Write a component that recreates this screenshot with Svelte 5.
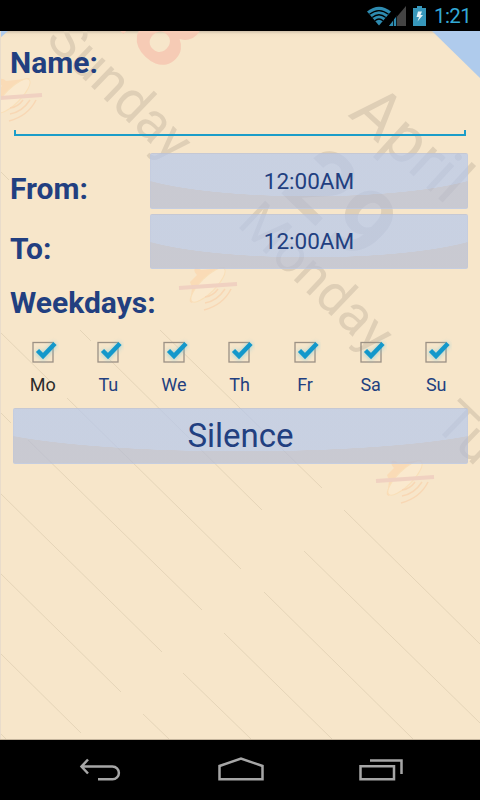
<script lang="ts">
  let name = $state('');
  let from = $state('12:00AM');
  let to = $state('12:00AM');
  let weekdays = $state([
    { label: 'Mo', checked: true },
    { label: 'Tu', checked: true },
    { label: 'We', checked: true },
    { label: 'Th', checked: true },
    { label: 'Fr', checked: true },
    { label: 'Sa', checked: true },
    { label: 'Su', checked: true },
  ]);

  // ruled lines of the calendar backdrop: x1, y1, x2, y2
  const rules = [
    [0, 140, 9, 149],
    [160, 299, 322, 457],
    [80, 299, 91, 310],
    [107, 326, 262, 479],
    [0, 301, 50, 350],
    [67, 367, 241, 538],
    [0, 381, 11, 392],
    [28, 409, 202, 579],
    [0, 462, 162, 621],
    [0, 542, 121, 661],
    [0, 622, 81, 702],
    [0, 702, 7, 709],
    [344, 479, 480, 613],
    [304, 520, 480, 692],
    [264, 561, 414, 709],
    [224, 602, 333, 709],
    [183, 642, 252, 709],
    [143, 683, 170, 709],
  ];

  const bells = [
    [13, 67],
    [208, 256],
    [405, 449],
  ];
</script>

<div class="phone">
  <header class="status-bar">
    <svg class="wifi" width="26" height="20" viewBox="0 0 26 20">
      <path d="M1 5.5Q13 -4 25 5.5L13 19.5Z" fill="#2e8bb0" />
      <path d="M3.5 8.3Q13 .8 22.5 8.3M6.2 11.5Q13 6 19.8 11.5M8.9 14.7Q13 11.3 17.1 14.7" fill="none" stroke="#000" stroke-width="1.3" />
    </svg>
    <svg class="signal" width="17" height="20" viewBox="0 0 17 20">
      <path d="M17 0V20H0Z" fill="#444" />
      <path d="M8 9.5V20H0Z" fill="#2e8bb0" />
      <path d="M4.5 13V20M7.5 10V20" stroke="#000" stroke-width=".8" />
    </svg>
    <svg class="battery" width="13" height="20" viewBox="0 0 13 20">
      <path d="M4 0h5v2h4v18H0V2h4Z" fill="#3797bb" />
      <path d="M5 5.5h4L7.5 9H10L4.5 15.5 6 11H3.5Z" fill="#e4f2f7" />
    </svg>
    <span class="clock">1:21</span>
  </header>

  <main>
    <svg class="backdrop" width="480" height="709" viewBox="0 0 480 709" aria-hidden="true">
      <path d="M432 0H480V47Z" fill="#afcbec" />
      <path d="M0 0H8L0 7Z" fill="#afcbec" />
      {#each rules as [x1, y1, x2, y2]}
        <line {x1} {y1} {x2} {y2} stroke="#8a7a60" stroke-opacity=".16" />
      {/each}
      <g class="ink">
        <text font-size="54" transform="translate(44 10) rotate(44)">Sunday</text>
        <text font-size="66" transform="translate(347 84) rotate(42.5)">April</text>
        <text class="date" font-size="97" transform="translate(278 159) rotate(44)">29</text>
        <text font-size="53" transform="translate(236 194) rotate(43.7)">Monday</text>
        <text font-size="55" transform="translate(432 394) rotate(44)">Tuesday</text>
      </g>
      <text class="date holiday" font-size="97" transform="translate(86 -33) rotate(44)">28</text>
      {#each bells as [x, y]}
        <g transform="translate({x} {y})">
          <path d="M-18 -5L-11 -12Q-15 -16 -13 -19Q-10 -20 -7 -17Q5 -18 17 -20L-16 16Q-20 15 -17 9L-16 1Z" fill="#fadbb6" />
          <ellipse rx="23" ry="7.5" transform="translate(0 -2) rotate(-45)" fill="#fae9ce" stroke="#f9dfb8" />
          <path d="M-3 10Q5 9 10 2M-3 16Q9 14 17 2M-4 23Q15 18 23 2" fill="none" stroke="#f8d7b4" stroke-width="1.5" />
          <path d="M-29 1L29 -3" stroke="#f0d1c1" stroke-width="4" />
        </g>
      {/each}
      <path d="M.5 0V709" stroke="#e9dccb" />
      <path d="M0 708.5H480" stroke="#c4b49c" />
    </svg>

    <form class="editor" onsubmit={(e) => e.preventDefault()}>
      <label class="heading" for="name">Name:</label>
      <div class="field">
        <input id="name" type="text" autocomplete="off" bind:value={name} />
      </div>

      <div class="time-row">
        <span class="heading">From:</span>
        <button type="button">{from}</button>
      </div>
      <div class="time-row">
        <span class="heading">To:</span>
        <button type="button">{to}</button>
      </div>

      <h2 class="heading weekdays-heading">Weekdays:</h2>
      <div class="weekdays">
        {#each weekdays as day, i}
          <label class="day" class:first={i === 0}>
            <input type="checkbox" bind:checked={day.checked} />
            <svg width="32" height="32" viewBox="0 0 32 32">
              <rect x="6" y="7.5" width="20" height="19.5" fill="none" stroke="#9c9184" stroke-width="1.3" />
              {#if day.checked}
                <path class="glow" d="M10 16L16 21.5 28.5 8.5" />
                <path class="tick" d="M10.5 15.5L16 21 28 8.5" />
              {/if}
            </svg>
            <span>{day.label}</span>
          </label>
        {/each}
      </div>

      <button class="mode" type="button">Silence</button>
    </form>
  </main>

  <nav class="nav-bar">
    <svg width="44" height="26" viewBox="0 0 44 26">
      <path d="M4 9.5H34.5A6.3 6.3 0 0 1 34.5 22.3H20M10 2.5L3.5 9.5 10 16.5" />
    </svg>
    <svg width="48" height="26" viewBox="0 0 48 26">
      <path d="M2.5 22.3V9L24 1.5 45.5 9V22.3Z" />
    </svg>
    <svg width="44" height="26" viewBox="0 0 44 26">
      <path d="M1.5 9.3H35V22.3H1.5ZM11 3.5H42.5V17" />
    </svg>
  </nav>
</div>

<style>
  :global(body) {
    margin: 0;
    background: #000;
  }

  .phone {
    width: 480px;
    height: 800px;
    display: flex;
    flex-direction: column;
    overflow: hidden;
    background: #000;
    color: #223f80;
    font-family: Roboto, 'Liberation Sans', sans-serif;
  }

  .status-bar {
    height: 31px;
    display: flex;
    justify-content: flex-end;
    align-items: center;
    padding-right: 8px;
    box-sizing: border-box;
  }

  .signal {
    margin-left: -3px;
  }

  .battery {
    margin-left: 7px;
  }

  .clock {
    width: 38px;
    margin-left: 8px;
    color: #33a9d6;
    font-size: 20.5px;
    letter-spacing: -0.6px;
  }

  main {
    position: relative;
    height: 709px;
    background: linear-gradient(#cfc0aa, #f3e2c6 3px, #f7e6ca 7px);
  }

  .backdrop {
    position: absolute;
    inset: 0;
  }

  .ink {
    fill: #dfcfb6;
  }

  .date {
    font-weight: 700;
  }

  .holiday {
    fill: #f6cbb5;
  }

  .editor {
    position: relative;
    display: flex;
    flex-direction: column;
    padding: 12px 12px 0 10px;
  }

  .heading {
    margin: 0;
    font-size: 30px;
    font-weight: 700;
    line-height: 40px;
  }

  .field {
    height: 51px;
    margin: 0 2px 17px 4px;
    display: flex;
    border-bottom: 2px solid #1b9dc9;
    background:
      linear-gradient(#1b9dc9, #1b9dc9) left bottom / 2px 4px no-repeat,
      linear-gradient(#1b9dc9, #1b9dc9) right bottom / 2px 4px no-repeat;
  }

  .field input {
    width: 100%;
    padding: 0 8px;
    border: 0;
    outline: 0;
    background: none;
    font: 24px Roboto, sans-serif;
  }

  .time-row {
    display: flex;
    align-items: flex-end;
    margin-bottom: 5px;
  }

  .time-row .heading {
    width: 140px;
    line-height: 40px;
  }

  button {
    flex: 1;
    height: 55.5px;
    padding: 0;
    border: 1px solid rgba(190, 198, 220, 0.3);
    border-radius: 2px;
    background: radial-gradient(
      ellipse 60% 33.5px at 50% 9px,
      rgba(180, 199, 236, 0.7) 99%,
      rgba(181, 189, 213, 0.7) 100%
    );
    color: #223f80;
    font-family: inherit;
    font-size: 22.5px;
  }

  .weekdays-heading {
    margin-top: 9px;
  }

  .weekdays {
    display: grid;
    grid-template-columns: repeat(7, 1fr);
    margin: 12px -1px 0 0;
  }

  .day {
    display: flex;
    flex-direction: column;
    align-items: center;
    font-size: 18px;
    line-height: 24px;
  }

  .day input {
    position: absolute;
    opacity: 0;
  }

  .day svg {
    margin-bottom: 6px;
  }

  .day.first {
    color: #2b2b2b;
  }

  .tick {
    fill: none;
    stroke: #1398cb;
    stroke-width: 4.5;
  }

  .glow {
    fill: none;
    stroke: #6cc5dd;
    stroke-width: 6;
    opacity: 0.5;
    filter: blur(2px);
  }

  .mode {
    flex: none;
    margin: 11px 0 0 3px;
    font-size: 33px;
  }

  .nav-bar {
    height: 60px;
    display: flex;
    justify-content: space-between;
    align-items: center;
    padding: 0 77px 0 78px;
  }

  .nav-bar path {
    fill: none;
    stroke: #a6a6a6;
    stroke-width: 2.5;
  }
</style>
